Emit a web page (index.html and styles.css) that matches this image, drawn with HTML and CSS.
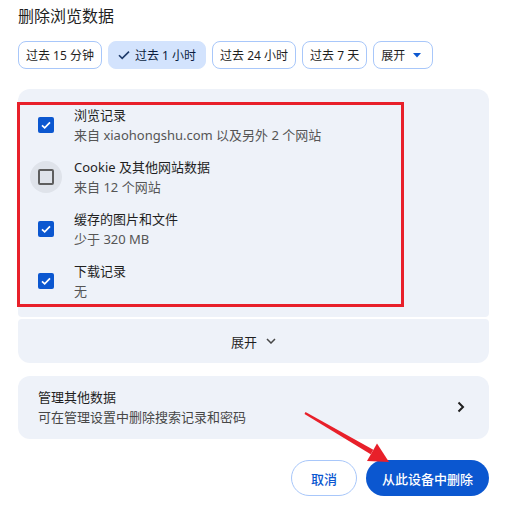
FILE: index.html
```html
<!DOCTYPE html>
<html lang="zh-CN">
<head>
<meta charset="utf-8">
<link rel="stylesheet" href="styles.css">
</head>
<body>
<div class="page">
  <h1 class="title">删除浏览数据</h1>
  <div class="chips">
    <div class="chip">过去 15 分钟</div>
    <div class="chip chip-selected">
      <svg class="chip-check" width="12" height="10" viewBox="0 0 12 10"><polyline points="1,5.2 4.2,8.4 11,1.6" fill="none" stroke="#1f3b6b" stroke-width="1.6"/></svg>
      过去 1 小时
    </div>
    <div class="chip">过去 24 小时</div>
    <div class="chip">过去 7 天</div>
    <div class="chip chip-menu">展开<svg class="chip-caret" width="8" height="5" viewBox="0 0 8 5"><polygon points="0,0 8,0 4,4.5" fill="#0b57d0"/></svg></div>
  </div>

  <div class="panel">
    <div class="item">
      <div class="cb-wrap"><span class="cb cb-on"><svg width="16" height="16" viewBox="0 0 16 16"><polyline points="4,8.3 6.7,10.9 12,5.4" fill="none" stroke="#fff" stroke-width="1.7"/></svg></span></div>
      <div class="texts"><div class="t1">浏览记录</div><div class="t2">来自 xiaohongshu.com 以及另外 2 个网站</div></div>
    </div>
    <div class="item">
      <div class="cb-wrap cb-hover"><span class="cb cb-off"></span></div>
      <div class="texts"><div class="t1">Cookie 及其他网站数据</div><div class="t2">来自 12 个网站</div></div>
    </div>
    <div class="item">
      <div class="cb-wrap"><span class="cb cb-on"><svg width="16" height="16" viewBox="0 0 16 16"><polyline points="4,8.3 6.7,10.9 12,5.4" fill="none" stroke="#fff" stroke-width="1.7"/></svg></span></div>
      <div class="texts"><div class="t1">缓存的图片和文件</div><div class="t2">少于 320 MB</div></div>
    </div>
    <div class="item">
      <div class="cb-wrap"><span class="cb cb-on"><svg width="16" height="16" viewBox="0 0 16 16"><polyline points="4,8.3 6.7,10.9 12,5.4" fill="none" stroke="#fff" stroke-width="1.7"/></svg></span></div>
      <div class="texts"><div class="t1">下载记录</div><div class="t2">无</div></div>
    </div>
  </div>
  <div class="expand">展开<svg class="expand-chev" width="10" height="6" viewBox="0 0 10 6"><polyline points="1,1 5,5 9,1" fill="none" stroke="#474747" stroke-width="1.5"/></svg></div>

  <div class="manage">
    <div class="texts"><div class="m1">管理其他数据</div><div class="m2">可在管理设置中删除搜索记录和密码</div></div>
    <svg class="manage-chev" width="8" height="12" viewBox="0 0 8 12"><polyline points="1.5,1.5 6,6 1.5,10.5" fill="none" stroke="#1f1f1f" stroke-width="2"/></svg>
  </div>

  <div class="actions">
    <button class="btn btn-cancel">取消</button>
    <button class="btn btn-primary">从此设备中删除</button>
  </div>
</div>

<div class="annot-box"></div>
<svg class="annot-arrow" width="505" height="507" viewBox="0 0 505 507">
  <polygon points="304.5,413.9 305.5,412.1 373.3,449.8 370.7,454.2" fill="#e8202a"/>
  <polygon points="377,443.4 367,461 389,462" fill="#e8202a"/>
</svg>
</body>
</html>
```

FILE: styles.css
```css
* { box-sizing: border-box; }
html, body { margin: 0; padding: 0; background: #fff; }
body {
  width: 505px;
  height: 507px;
  overflow: hidden;
  font-family: "Noto Sans", "Noto Sans CJK SC", sans-serif;
  color: #1f1f1f;
  position: relative;
}
.page { padding: 4px 16px 0 18px; }
.title {
  margin: 0;
  font-size: 16px;
  line-height: 24px;
  font-weight: 400;
  color: #1f1f1f;
}
.chips {
  display: flex;
  gap: 6px;
  margin-top: 13px;
}
.chip {
  height: 28px;
  border: 1px solid #a8c7fa;
  border-radius: 8px;
  padding: 0 7px;
  font-size: 12px;
  display: flex;
  align-items: center;
  color: #1f1f1f;
  white-space: nowrap;
}
.chip-selected {
  background: #d3e3fd;
  border-color: #d3e3fd;
  color: #0b1d40;
  padding: 0 9px 0 9px;
}
.chip-check { margin-right: 5px; }
.chip-menu { padding-right: 11px; }
.chip-caret { margin-left: 8px; }

.panel {
  margin-top: 20px;
  background: #eef2f9;
  border-radius: 12px 12px 4px 4px;
  padding: 10px 0;
}
.item {
  height: 52px;
  display: flex;
  align-items: center;
  padding-left: 12px;
}
.cb-wrap {
  width: 32px;
  height: 32px;
  border-radius: 50%;
  display: flex;
  align-items: center;
  justify-content: center;
  margin-right: 12px;
}
.cb-hover { background: #dfe3ea; }
.cb {
  width: 16px;
  height: 16px;
  border-radius: 2px;
  display: block;
}
.cb svg { display: block; }
.cb-on { background: #0b57d0; }
.cb-off { border: 2px solid #5e5e5e; }
.texts { display: flex; flex-direction: column; }
.t1 { font-size: 13px; line-height: 20px; color: #1f1f1f; }
.t2 { font-size: 13px; line-height: 20px; color: #555; }

.expand {
  margin-top: 2px;
  height: 44px;
  background: #eef2f9;
  border-radius: 4px 4px 12px 12px;
  display: flex;
  align-items: center;
  justify-content: center;
  font-size: 13px;
  color: #1f1f1f;
}
.expand-chev { margin-left: 9px; }

.manage {
  margin-top: 13px;
  background: #eef2f9;
  border-radius: 12px;
  height: 63px;
  padding: 11px 24px 12px 20px;
  display: flex;
  align-items: center;
  justify-content: space-between;
}
.m1 { font-size: 13px; line-height: 20px; color: #1f1f1f; }
.m2 { font-size: 13px; line-height: 20px; color: #474747; }

.actions {
  margin-top: 21px;
  display: flex;
  justify-content: flex-end;
  gap: 9px;
}
.btn {
  height: 36px;
  border-radius: 18px;
  font-family: "Noto Sans", "Noto Sans CJK SC", sans-serif;
  font-size: 13px;
  font-weight: 500;
  cursor: pointer;
}
.btn-cancel {
  background: #fff;
  border: 1px solid #a8c7fa;
  color: #0b57d0;
  padding: 0 19px;
}
.btn-primary {
  background: #0b57d0;
  border: none;
  color: #fff;
  padding: 0 16px;
}

.annot-box {
  position: absolute;
  left: 17px;
  top: 102px;
  width: 387px;
  height: 205px;
  border: 3px solid #e8202a;
  pointer-events: none;
}
.annot-arrow {
  position: absolute;
  left: 0;
  top: 0;
  pointer-events: none;
}
```
